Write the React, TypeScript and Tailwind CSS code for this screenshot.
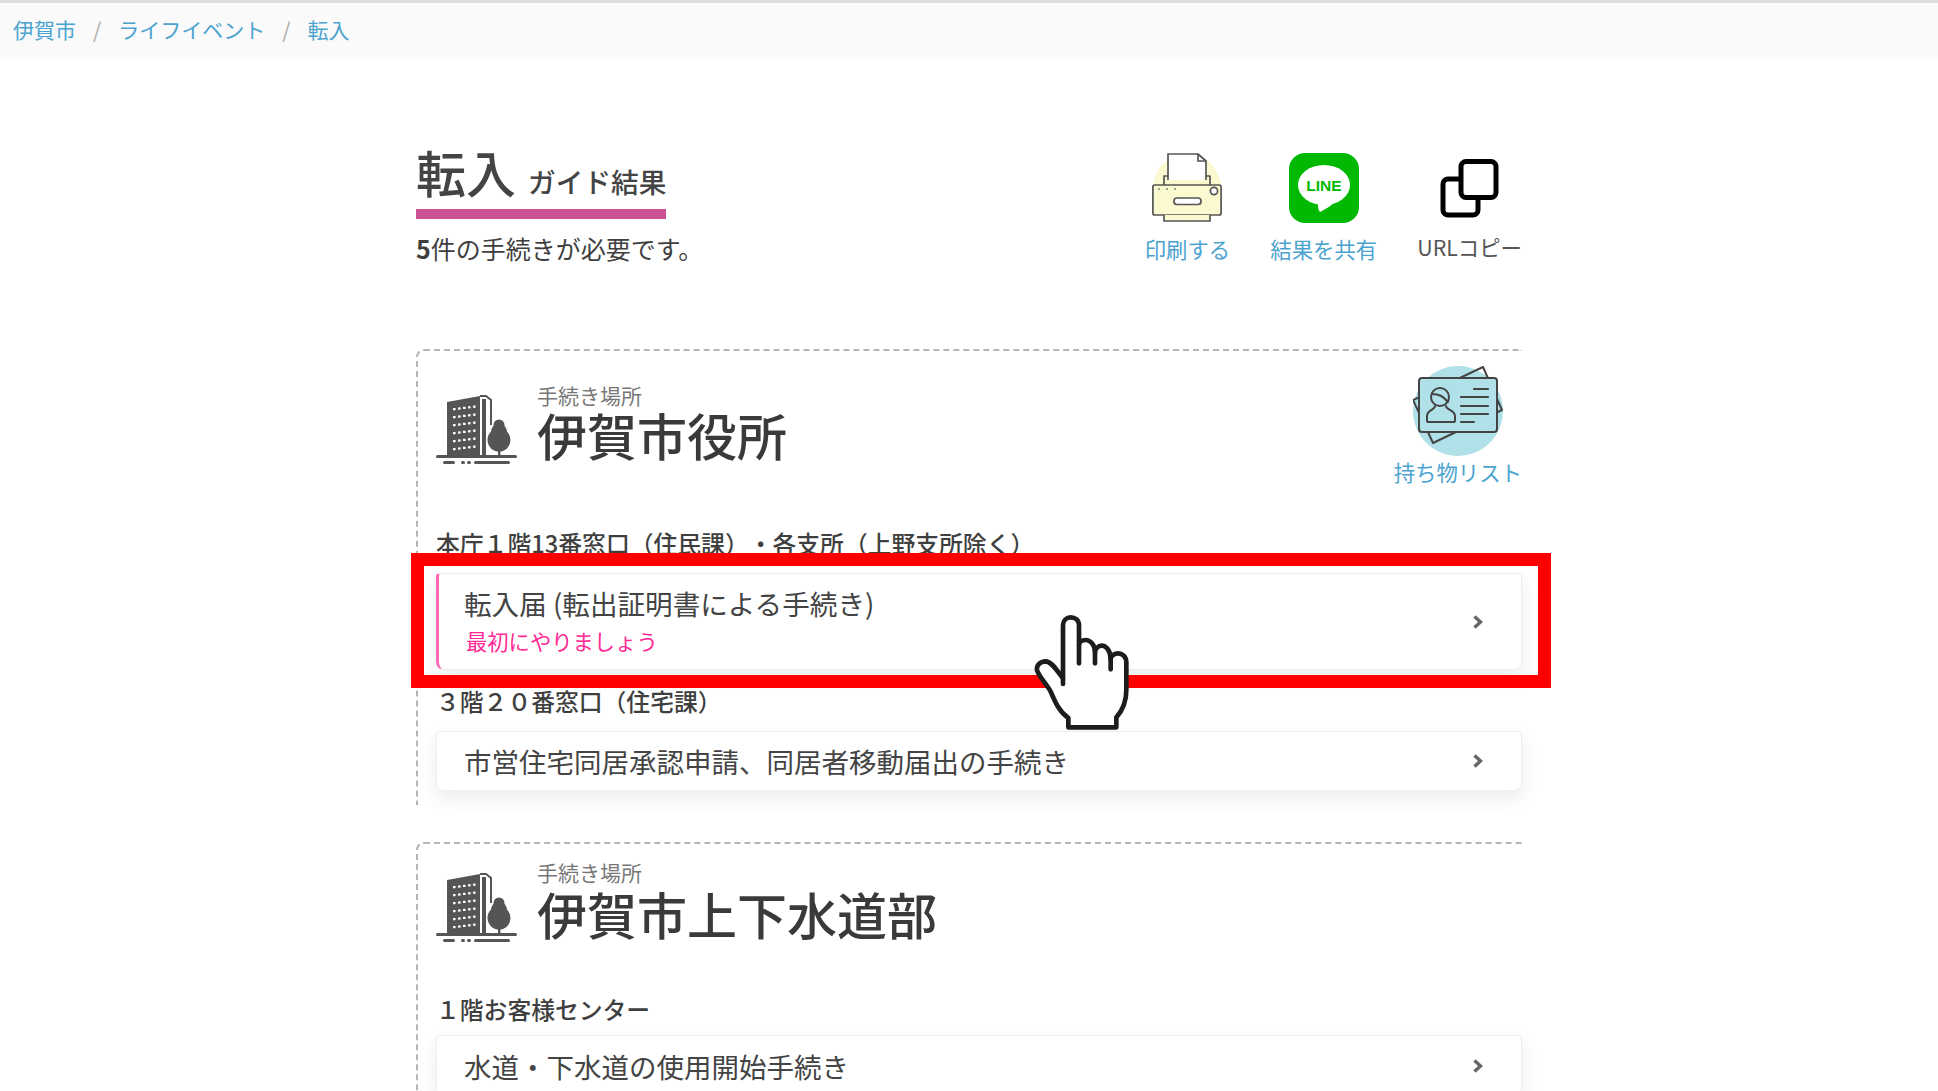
import React from 'react';

function Chevron() {
  return (
    <svg width="12" height="16" viewBox="0 0 12 16" className="shrink-0">
      <path d="M2.5 2.5 L8.5 8 L2.5 13.5" fill="none" stroke="#666" strokeWidth="3.4" />
    </svg>
  );
}

function BuildingIcon() {
  const rows = [13, 21, 29, 37, 45, 53];
  const cols = [18, 23, 28, 33, 38];
  return (
    <svg width="81" height="70" viewBox="0 0 81 70" className="shrink-0">
      <path d="M11 7 L44 1 L44 60 L11 60 Z" fill="#555" />
      <path d="M44 1 L50 1 L55 5 L55 30" fill="none" stroke="#555" strokeWidth="2" />
      <path d="M48 60 L48 4" fill="none" stroke="#555" strokeWidth="4" />
      {rows.map((y) =>
        cols.map((x) => <rect key={`${x}-${y}`} x={x - 1} y={y - (x - 18) * 0.12} width="2.6" height="2.2" fill="#fff" />)
      )}
      <circle cx="63" cy="30" r="5.5" fill="#555" />
      <circle cx="63" cy="37" r="8" fill="#555" />
      <circle cx="63" cy="45" r="11.5" fill="#555" />
      <rect x="62" y="50" width="2.4" height="11" fill="#555" />
      <rect x="0" y="60" width="81" height="3" rx="1.5" fill="#555" />
      <rect x="7" y="66" width="12" height="3" rx="1.5" fill="#555" />
      <rect x="25" y="66" width="4" height="3" rx="1.5" fill="#555" />
      <rect x="31" y="66" width="4" height="3" rx="1.5" fill="#555" />
      <rect x="38" y="66" width="36" height="3" rx="1.5" fill="#555" />
    </svg>
  );
}

function PrinterIcon() {
  return (
    <svg width="70" height="70" viewBox="0 0 70 70">
      <circle cx="35" cy="35" r="34" fill="#faf9cf" />
      <g fill="none" stroke="#555" strokeWidth="1.7" strokeLinejoin="round">
        <path d="M16 27 V1 H46 L54 8 V27" fill="#fff" />
        <path d="M46 1 V8 H54" />
        <path d="M12 32 V23 H16 M54 23 H58 V32" />
        <rect x="0.9" y="32" width="68.2" height="30" rx="2" fill="#faf9cf" />
        <path d="M12 62 V68 H58 V62" fill="#faf9cf" />
        <rect x="22" y="45" width="27" height="6.5" rx="3" fill="#fff" />
        <circle cx="62" cy="38" r="3.6" fill="#fff" />
      </g>
      <circle cx="7" cy="36" r="0.9" fill="#777" />
      <circle cx="15" cy="36" r="0.9" fill="#777" />
      <circle cx="23" cy="36" r="0.9" fill="#777" />
    </svg>
  );
}

function LineIcon() {
  return (
    <svg width="70" height="70" viewBox="0 0 70 70">
      <rect width="70" height="70" rx="16" fill="#00b900" />
      <ellipse cx="35" cy="32" rx="26" ry="20" fill="#fff" />
      <path d="M29 50 C29 54 29 57 31 59 C37 56 43 52 47 48 Z" fill="#fff" />
      <text x="35" y="38" textAnchor="middle" fontFamily="'Liberation Sans', sans-serif" fontWeight="700" fontSize="15.5" fill="#00b900">
        LINE
      </text>
    </svg>
  );
}

function CopyIcon() {
  return (
    <svg width="59" height="59" viewBox="0 0 59 59">
      <rect x="3" y="20" width="35" height="36" rx="5" fill="#fff" stroke="#000" strokeWidth="5" />
      <rect x="21" y="2.5" width="35" height="36" rx="5" fill="#fff" stroke="#000" strokeWidth="5" />
    </svg>
  );
}

function IdCardIcon() {
  return (
    <svg width="90" height="90" viewBox="0 0 90 90">
      <circle cx="45" cy="45" r="45" fill="#b1e1e8" />
      <g fill="none" stroke="#444" strokeWidth="2" strokeLinejoin="round" strokeLinecap="round">
        <path d="M0 34 L70 1 L89 44 L20 77 Z" />
        <rect x="6" y="12" width="78" height="54" rx="3" fill="#b1e1e8" />
        <circle cx="27" cy="31" r="9" />
        <path d="M19 28 C26 28 30 30 35 36" />
        <path d="M22 40 C22 44 14 44 14 50 V55 Q14 56 15 56 H41 Q42 56 42 55 V50 C42 44 33 44 33 40" />
        <path d="M61 23 H75 M48 31 H75 M48 40 H75 M48 48 H75 M48 56 H61" strokeWidth="2.2" />
      </g>
    </svg>
  );
}

function HandCursor() {
  return (
    <svg width="160" height="160" viewBox="0 0 480 480">
      <path
        d="M208 412 H352 V382 C372 360 382 335 382 300 V218 C382 198 368 190 358 190 C345 190 335 198 335 208 C335 180 320 167 308 167 C298 167 288 176 288 188 C288 162 272 150 260 150 C250 150 240 156 240 166 V106 C240 90 228 82 215 82 C202 82 192 92 192 106 V265 C175 245 160 215 140 214 C122 214 112 228 114 240 C118 258 145 285 155 305 C168 335 180 365 208 384 Z"
        fill="#fff"
        stroke="#1c1c1c"
        strokeWidth="14"
        strokeLinejoin="round"
      />
      <path d="M240 166 V220 M288 188 V220 M335 208 V238 M192 265 V282" fill="none" stroke="#1c1c1c" strokeWidth="14" strokeLinecap="round" />
    </svg>
  );
}

function ActionItem({ icon, label, muted }: { icon: React.ReactNode; label: string; muted?: boolean }) {
  return (
    <div className="flex flex-col items-center">
      <div className="h-[70px] flex items-center justify-center">{icon}</div>
      <span className={muted ? 'mt-[9px] text-[21.4px] leading-[30px] text-[#555]' : 'mt-[11px] text-[21.4px] leading-[30px] text-[#4ba3cf]'}>
        {label}
      </span>
    </div>
  );
}

function WindowLabel({ text, className }: { text: string; className: string }) {
  return <p className={`text-[23.8px] leading-[30px] font-medium text-[#3f3f3f] ${className}`}>{text}</p>;
}

function ProcedureCard({ title, className }: { title: string; className: string }) {
  return (
    <div className={`flex items-center justify-between bg-white border border-[#eee] rounded-b-lg rounded-t-sm pl-[27px] pr-[37px] shadow-[0_8px_20px_rgba(0,0,0,0.08)] ${className}`}>
      <span className="text-[27.5px] leading-[34px] text-[#444]">{title}</span>
      <Chevron />
    </div>
  );
}

export default function App() {
  return (
    <div className="relative h-[1091px] overflow-hidden bg-white font-['Noto_Sans_CJK_JP','Noto_Sans',sans-serif] text-[#444] [text-spacing-trim:space-all]">
      <nav className="h-[57px] border-t-[3px] border-[#ddd] bg-[#fafafa] flex items-center gap-[17px] pl-[13px] text-[21px] text-[#4ba3cf]">
        <span>伊賀市</span>
        <span className="text-[#aaa]">/</span>
        <span>ライフイベント</span>
        <span className="text-[#aaa]">/</span>
        <span>転入</span>
      </nav>

      <main className="mx-auto w-[1106px] pt-[90px]">
        <div className="flex justify-between items-start">
          <div>
            <h1 className="inline-flex items-baseline gap-[12px] border-b-[10px] border-[#cb5094] pb-[4px] leading-[48px] text-[#444]">
              <span className="text-[50px] font-medium">転入</span>
              <span className="text-[27.7px] font-medium">ガイド結果</span>
            </h1>
            <p className="mt-[14px] text-[25px] leading-[30px] text-[#3f3f3f]">
              <span className="font-bold">5</span>件の手続きが必要です。
            </p>
          </div>
          <div className="flex gap-[40px] pt-[6px]">
            <ActionItem icon={<PrinterIcon />} label="印刷する" />
            <ActionItem icon={<LineIcon />} label="結果を共有" />
            <ActionItem icon={<CopyIcon />} label="URLコピー" muted />
          </div>
        </div>

        <section className="mt-[85px] border-t-2 border-l-2 border-dashed border-[#b5b5b5] rounded-tl-lg pl-[18px] pt-[15px] pb-[14px]">
          <div className="flex justify-between items-start">
            <div className="flex items-start gap-[20px]">
              <div className="mt-[29px]">
                <BuildingIcon />
              </div>
              <div className="mt-[19px]">
                <p className="text-[21px] leading-[21px] text-[#777]">手続き場所</p>
                <h2 className="mt-[3px] text-[50px] leading-[50px] font-medium text-[#3a3a3a]">伊賀市役所</h2>
              </div>
            </div>
            <div className="flex flex-col items-center">
              <IdCardIcon />
              <span className="mt-[1px] text-[21.4px] leading-[30px] text-[#4ba3cf]">持ち物リスト</span>
            </div>
          </div>

          <WindowLabel text="本庁１階13番窓口（住民課）・各支所（上野支所除く）" className="mt-[41px]" />

          <div className="relative mt-[15px] h-[97px] flex items-center justify-between bg-white border border-[#eee] border-l-[3px] border-l-[#ff69b4] rounded-b-lg rounded-t-sm pl-[25px] pr-[37px] shadow-[0_8px_20px_rgba(0,0,0,0.08)]">
            <div className="-mt-[2px]">
              <p className="text-[27.6px] leading-[34px] text-[#444]">転入届 (転出証明書による手続き)</p>
              <p className="mt-[6px] pl-[2px] text-[21.3px] leading-[30px] text-[#ff2a94]">最初にやりましょう</p>
            </div>
            <Chevron />
            <div className="absolute -left-[28px] -top-[21px] -right-[30px] -bottom-[19px] border-[13px] border-[#ff0000]" />
            <div className="absolute left-[560px] top-[16px] z-10">
              <HandCursor />
            </div>
          </div>

          <WindowLabel text="３階２０番窓口（住宅課）" className="mt-[16px]" />
          <ProcedureCard title="市営住宅同居承認申請、同居者移動届出の手続き" className="mt-[15px] h-[60px]" />
        </section>

        <section className="mt-[37px] border-t-2 border-l-2 border-dashed border-[#b5b5b5] rounded-tl-lg pl-[18px] pt-[18px]">
          <div className="flex items-start gap-[20px]">
            <div className="mt-[11px]">
              <BuildingIcon />
            </div>
            <div>
              <p className="text-[21px] leading-[21px] text-[#777]">手続き場所</p>
              <h2 className="mt-[5px] text-[50px] leading-[50px] font-medium text-[#3a3a3a]">伊賀市上下水道部</h2>
            </div>
          </div>

          <WindowLabel text="１階お客様センター" className="mt-[51px]" />
          <ProcedureCard title="水道・下水道の使用開始手続き" className="mt-[11px] h-[62px]" />
        </section>
      </main>
    </div>
  );
}
